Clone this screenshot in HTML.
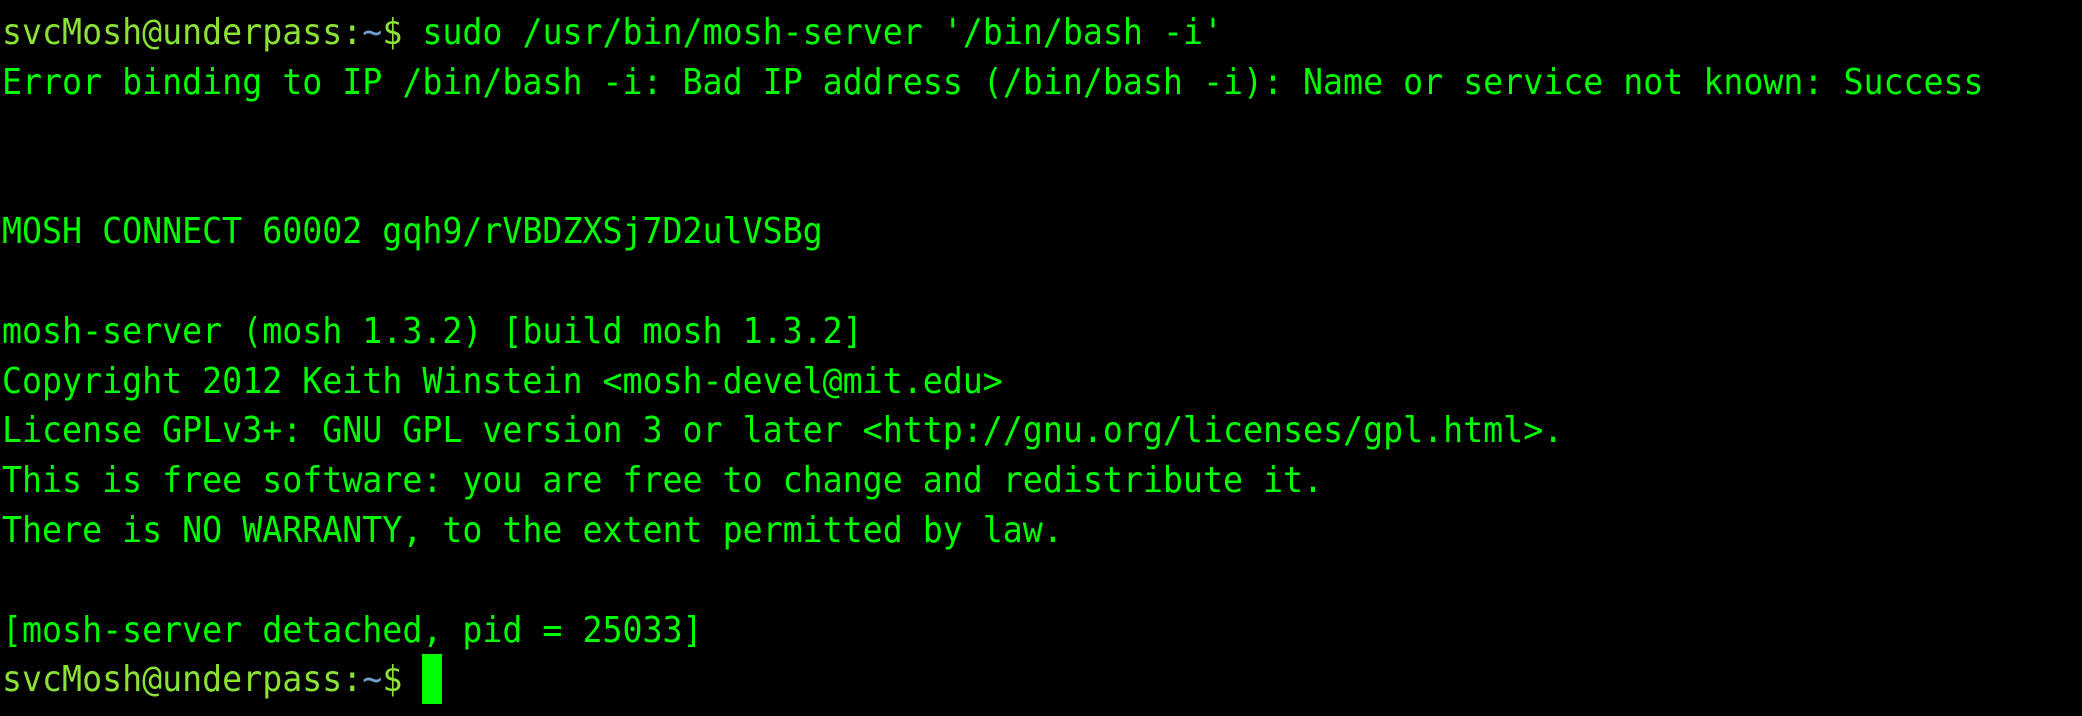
<!DOCTYPE html>
<html><head><meta charset="utf-8"><style>
html,body{margin:0;padding:0;background:#000;width:2082px;height:716px;overflow:hidden}
pre{margin:0;position:absolute;left:2px;top:8px;font-family:"DejaVu Sans Mono","Liberation Mono",monospace;font-size:36px;line-height:49.8px;letter-spacing:0;color:#00ff00;white-space:pre;transform:scaleX(0.9235);transform-origin:0 0}
.p{color:#8ae234}.t{color:#729fcf}
.cur{position:absolute;left:422px;top:654px;width:20px;height:50px;background:#00ff00}
</style></head><body>
<pre><span class="p">svcMosh@underpass:</span><span class="t">~</span><span class="p">$</span> sudo /usr/bin/mosh-server '/bin/bash -i'
Error binding to IP /bin/bash -i: Bad IP address (/bin/bash -i): Name or service not known: Success


MOSH CONNECT 60002 gqh9/rVBDZXSj7D2ulVSBg

mosh-server (mosh 1.3.2) [build mosh 1.3.2]
Copyright 2012 Keith Winstein &lt;mosh-devel@mit.edu&gt;
License GPLv3+: GNU GPL version 3 or later &lt;http://gnu.org/licenses/gpl.html&gt;.
This is free software: you are free to change and redistribute it.
There is NO WARRANTY, to the extent permitted by law.

[mosh-server detached, pid = 25033]
<span class="p">svcMosh@underpass:</span><span class="t">~</span><span class="p">$</span> </pre>
<div class="cur"></div>
</body></html>
